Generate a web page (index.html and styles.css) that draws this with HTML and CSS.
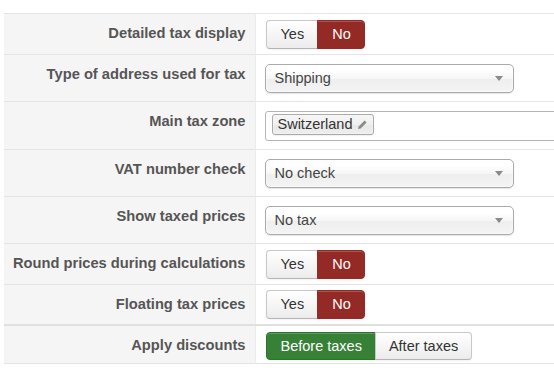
FILE: index.html
```html
<!DOCTYPE html>
<html>
<head>
<meta charset="utf-8">
<link rel="stylesheet" href="styles.css">
</head>
<body>
<div class="wrap">
<table class="settings">
  <colgroup><col class="col-key"><col class="col-val"></colgroup>
  <tr class="row-toggle">
    <td class="key">Detailed tax display</td>
    <td class="val"><div class="btn-group"><span class="btn">Yes</span><span class="btn active-no">No</span></div></td>
  </tr>
  <tr class="row-select">
    <td class="key">Type of address used for tax</td>
    <td class="val"><div class="chosen"><span>Shipping</span><i class="arrow"></i></div></td>
  </tr>
  <tr class="row-select">
    <td class="key">Main tax zone</td>
    <td class="val"><div class="multi"><span class="tag">Switzerland<svg class="pencil" width="11" height="11" viewBox="0 0 11 11"><path d="M1 10 L1.6 7.4 L7.6 1.4 L9.6 3.4 L3.6 9.4 Z" fill="#8a8a8a"/></svg></span></div></td>
  </tr>
  <tr class="row-select">
    <td class="key">VAT number check</td>
    <td class="val"><div class="chosen"><span>No check</span><i class="arrow"></i></div></td>
  </tr>
  <tr class="row-select">
    <td class="key">Show taxed prices</td>
    <td class="val"><div class="chosen"><span>No tax</span><i class="arrow"></i></div></td>
  </tr>
  <tr class="row-toggle">
    <td class="key">Round prices during calculations</td>
    <td class="val"><div class="btn-group"><span class="btn">Yes</span><span class="btn active-no">No</span></div></td>
  </tr>
  <tr class="row-toggle row-tight">
    <td class="key">Floating tax prices</td>
    <td class="val"><div class="btn-group"><span class="btn">Yes</span><span class="btn active-no">No</span></div></td>
  </tr>
  <tr class="row-toggle row-last">
    <td class="key">Apply discounts</td>
    <td class="val"><div class="btn-group"><span class="btn active-yes">Before taxes</span><span class="btn">After taxes</span></div></td>
  </tr>
</table>
</div>
</body>
</html>
```

FILE: styles.css
```css
html, body {
  margin: 0;
  padding: 0;
  background: #fff;
  overflow: hidden;
}
.wrap {
  padding: 13px 0 0 4px;
  width: 640px;
}
.settings {
  border-collapse: collapse;
  table-layout: fixed;
  width: 100%;
  font-family: "Liberation Sans", Arial, sans-serif;
  font-size: 14.5px;
}
.col-key {
  width: 251px;
}
.settings tr {
  border-top: 1px solid #e4e4e4;
  border-bottom: 1px solid #e4e4e4;
}
.settings tr.row-last {
  border-top: 2px solid #e0e0e0;
}
.key {
  background: #f5f5f5;
  color: #555;
  font-weight: bold;
  font-size: 14.7px;
  text-align: right;
  vertical-align: top;
  padding: 11px 9px 0 0;
  line-height: 16px;
  white-space: nowrap;
}
.val {
  padding: 6px 0 5px 10px;
  vertical-align: top;
  border-left: 1px solid #ececec;
}
.row-select .val {
  padding: 9px 0 8px 9px;
}
.row-tight .val {
  padding: 5px 0 5px 10px;
}
.row-last .val {
  padding: 6px 0 3px 10px;
}
.btn-group {
  display: inline-flex;
}
.btn {
  display: inline-block;
  padding: 4px 13px;
  line-height: 19px;
  color: #333;
  background: linear-gradient(#ffffff, #ececec);
  border: 1px solid #c8c8c8;
  border-bottom-color: #b3b3b3;
  box-shadow: inset 0 1px 0 rgba(255,255,255,.2), 0 1px 2px rgba(0,0,0,.05);
}
.btn:first-child {
  border-radius: 4px 0 0 4px;
  padding-left: 14px;
}
.btn:last-child {
  border-radius: 0 4px 4px 0;
  margin-left: -1px;
}
.btn.active-no {
  background: #942a25;
  border-color: #942a25;
  color: #fff;
  padding: 4px 13px 4px 14px;
}
.btn.active-yes {
  background: #378137;
  border-color: #2f722f;
  color: #fff;
}
.row-last .btn {
  line-height: 18px;
}
.chosen {
  position: relative;
  width: 238px;
  height: 27px;
  line-height: 27px;
  border: 1px solid #aaa;
  border-radius: 5px;
  background: linear-gradient(#ffffff 20%, #f6f6f6 50%, #eeeeee 52%, #f4f4f4 100%);
  box-shadow: inset 0 0 3px #fff, 0 1px 1px rgba(0,0,0,.1);
  color: #444;
  padding-left: 9px;
}
.arrow {
  position: absolute;
  right: 10px;
  top: 11px;
  width: 0;
  height: 0;
  border-left: 4px solid transparent;
  border-right: 4px solid transparent;
  border-top: 5px solid #8a8a8a;
}
.multi {
  height: 28px;
  border: 1px solid #b5b5b5;
  border-radius: 3px;
  background: #fff;
  padding: 0 0 0 6px;
  display: flex;
  align-items: flex-start;
  width: 400px;
}
.tag {
  margin-top: 2px;
  display: inline-flex;
  align-items: center;
  height: 19px;
  line-height: 19px;
  padding: 0 5px 0 5px;
  border: 1px solid #aaa;
  border-radius: 3px;
  background: linear-gradient(#f4f4f4 20%, #f0f0f0 50%, #e8e8e8 52%, #eeeeee 100%);
  box-shadow: inset 0 0 2px #fff, 0 1px 0 rgba(0,0,0,.05);
  color: #333;
}
.pencil {
  margin-left: 5px;
}
```
